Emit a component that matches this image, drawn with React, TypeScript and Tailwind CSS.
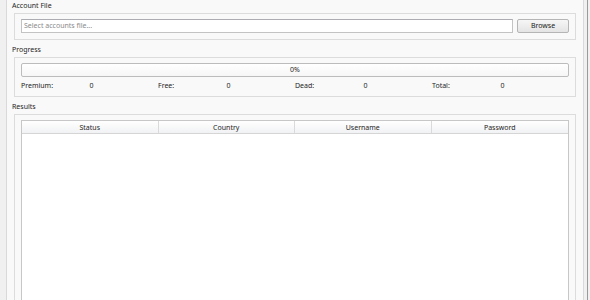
export default function App() {
  const stats = [
    { label: 'Premium:', value: '0' },
    { label: 'Free:', value: '0' },
    { label: 'Dead:', value: '0' },
    { label: 'Total:', value: '0' },
  ]
  const columns = ['Status', 'Country', 'Username', 'Password']

  return (
    <div
      className="flex h-screen overflow-hidden bg-[#f0f0f0] pl-[6px] pr-[2px] text-[7px] text-[#1e1e1e]"
      style={{ fontFamily: '"Noto Sans", "Open Sans", Arial, sans-serif' }}
    >
      {/* Tab page */}
      <div className="flex flex-1 flex-col border-x border-[#d9d9d9] bg-[#f9f9f9] px-[7px]">
        {/* Account File */}
        <div className="flex h-[13px] items-end pb-[4px]">
          <span className="-ml-[2px] leading-none">Account File</span>
        </div>
        <div className="border border-[#dcdcdc] bg-[#f9f9f9] px-[6px] pb-[6px] pt-[5px]">
          <div className="flex gap-[4px]">
            <div className="flex h-[14px] flex-1 items-center border border-[#c3c3c3] border-t-[#abadb3] bg-white pl-[2px] text-[#8a8a8a]">
              Select accounts file...
            </div>
            <button className="flex h-[14px] w-[52px] items-center justify-center rounded-[2px] border border-[#b5b5b5] bg-gradient-to-b from-[#f6f6f6] to-[#e4e4e4] text-[#222]">
              Browse
            </button>
          </div>
        </div>

        {/* Progress */}
        <div className="flex h-[17px] items-end pb-[4px]">
          <span className="-ml-[2px] leading-none">Progress</span>
        </div>
        <div className="border border-[#dcdcdc] bg-[#f9f9f9] px-[6px] pb-[4px] pt-[5px]">
          <div className="flex h-[14px] items-center justify-center rounded-[2px] border border-[#bcbcbc] bg-gradient-to-b from-white to-[#f6f6f6]">
            0%
          </div>
          <div className="mt-[3px] grid h-[12px] grid-cols-8 items-center">
            {stats.map((s) => (
              <>
                <span key={s.label + 'l'}>{s.label}</span>
                <span key={s.label + 'v'}>{s.value}</span>
              </>
            ))}
          </div>
        </div>

        {/* Results */}
        <div className="flex h-[17px] items-end pb-[4px]">
          <span className="-ml-[2px] leading-none">Results</span>
        </div>
        <div className="flex flex-1 flex-col border border-b-0 border-[#dcdcdc] bg-[#f9f9f9] px-[6px] pt-[5px]">
          <div className="flex flex-1 flex-col border border-b-0 border-[#c7c7c7] bg-white">
            <div className="grid h-[13px] grid-cols-4 border-b border-[#d5d5d5] bg-gradient-to-b from-white to-[#f1f2f4]">
              {columns.map((c, i) => (
                <div
                  key={c}
                  className={`flex items-center justify-center leading-none ${i < 3 ? 'border-r border-[#dadada]' : ''}`}
                >
                  {c}
                </div>
              ))}
            </div>
            <div className="flex-1" />
          </div>
        </div>
      </div>
      <div className="w-[3px]" />
      <div className="w-[1px] bg-[#9a9a9a]" />
    </div>
  )
}
